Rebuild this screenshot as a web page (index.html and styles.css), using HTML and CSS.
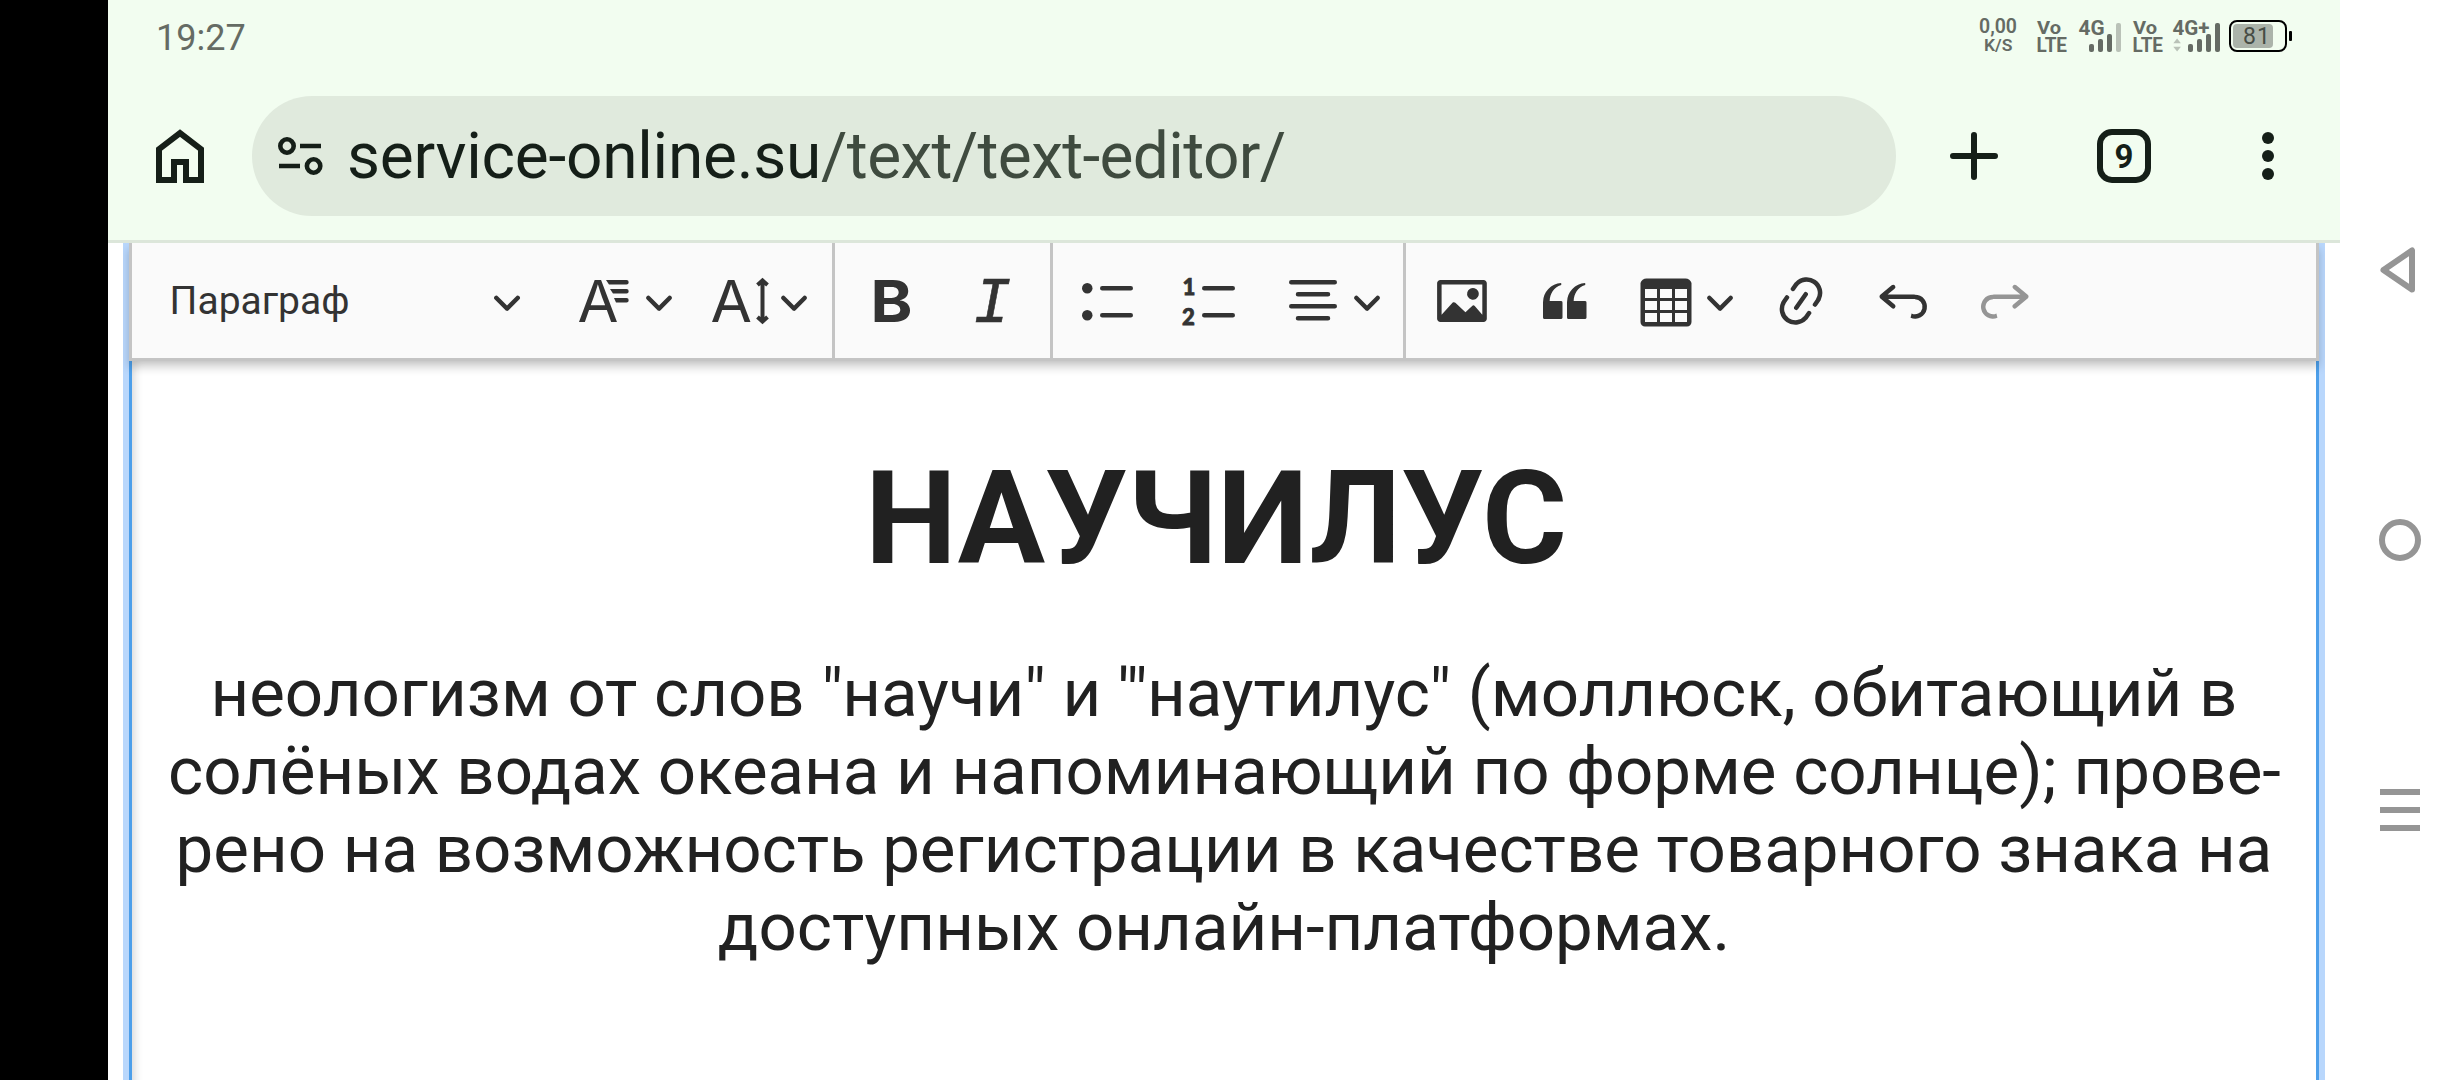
FILE: index.html
```html
<!DOCTYPE html>
<html lang="ru">
<head>
  <meta charset="UTF-8" />
  <meta name="viewport" content="width=device-width, initial-scale=1.0"/>
  <title>Текстовый редактор</title>
  <link rel="stylesheet" href="styles.css">
</head>
<body>

  <div class="cutout"></div>

  <div class="browser">
    <div class="status-bar">
      <span class="time">19:27</span>
      <svg class="status-icons" width="320" height="60" viewBox="1975 0 320 60">
        <g fill="#656b64">
          <rect x="2089" y="44" width="5" height="8" rx="2"/>
          <rect x="2098" y="39" width="5" height="13" rx="2"/>
          <rect x="2107" y="34" width="5" height="18" rx="2"/>
          <rect x="2116" y="23" width="5" height="29" rx="2" fill="#bac2b8"/>
          <rect x="2188" y="44" width="5" height="8" rx="2"/>
          <rect x="2197" y="39" width="5" height="13" rx="2"/>
          <rect x="2206" y="34" width="5" height="18" rx="2"/>
          <rect x="2215" y="23" width="5" height="29" rx="2"/>
          <path d="M2173.3 43.3l3.8-4.8 3.8 4.8zm0 3.4l3.8 4.8 3.8-4.8z" fill="#bac2b8"/>
        </g>
        <rect x="2230" y="21" width="56" height="30" rx="7" fill="none" stroke="#000" stroke-width="2"/>
        <rect x="2233" y="24" width="40" height="24" rx="4" fill="#abb3aa"/>
        <rect x="2289" y="31" width="3" height="10" rx="1"/>
        <g class="status-text">
          <text x="1979" y="33" font-size="20" textLength="38" lengthAdjust="spacingAndGlyphs">0,00</text>
          <text x="1984" y="51" font-size="16.5" textLength="28.5" lengthAdjust="spacingAndGlyphs">K/S</text>
          <text class="strong" x="2037" y="33.5" font-size="18.5" textLength="24" lengthAdjust="spacingAndGlyphs">Vo</text>
          <text class="strong" x="2036.5" y="52" font-size="19.5" textLength="30.5" lengthAdjust="spacingAndGlyphs">LTE</text>
          <text class="strong" x="2078.5" y="35" font-size="20.5" textLength="26" lengthAdjust="spacingAndGlyphs">4G</text>
          <text class="strong" x="2133" y="33.5" font-size="18.5" textLength="24" lengthAdjust="spacingAndGlyphs">Vo</text>
          <text class="strong" x="2132.5" y="52" font-size="19.5" textLength="30.5" lengthAdjust="spacingAndGlyphs">LTE</text>
          <text class="strong" x="2172.5" y="35" font-size="20.5" textLength="37" lengthAdjust="spacingAndGlyphs">4G+</text>
          <text class="percent" x="2243" y="44" font-size="23" textLength="27">81</text>
        </g>
      </svg>
    </div>

    <div class="address-row">
      <svg class="home" width="48" height="54" viewBox="0 0 48 54">
        <path d="M3 20.2V51h15V33h12v18h15V20.2L24 4z" fill="none" stroke="#151f18" stroke-width="6"/>
      </svg>
      <div class="url-bar">
        <svg width="46" height="40" viewBox="0 0 46 40" fill="none" stroke="#151f18" stroke-width="4.6">
          <circle cx="10" cy="10" r="6.7"/>
          <path d="M23 10h21M2 30h21"/>
          <circle cx="36.6" cy="30" r="6.7"/>
        </svg>
        <span class="url">service-online.su<span class="path">/text/text-editor/</span></span>
      </div>
      <svg class="new-tab" width="48" height="48" viewBox="0 0 48 48">
        <path d="M24 3v42M3 24h42" stroke="#151f18" stroke-width="6" stroke-linecap="round"/>
      </svg>
      <span class="tabs">9</span>
      <svg class="more" width="12" height="48" viewBox="0 0 12 48" fill="#151f18">
        <circle cx="6" cy="6" r="6"/><circle cx="6" cy="24" r="6"/><circle cx="6" cy="42" r="6"/>
      </svg>
    </div>

    <div class="page">
      <div class="editor">
        <div class="toolbar">
          <div class="group first">
            <div class="btn heading">
              <span>Параграф</span>
              <svg class="arrow" viewBox="0 0 10 10"><path d="M.941 4.523a.75.75 0 1 1 1.06-1.06l3.006 3.005 3.005-3.005a.75.75 0 1 1 1.06 1.06l-3.549 3.55a.75.75 0 0 1-1.168-.136z"/></svg>
            </div>
            <div class="btn dropdown">
              <svg class="icon" viewBox="0 0 60 60">
                <text class="letter" x="2.5" y="51" font-size="57.8" textLength="41" lengthAdjust="spacingAndGlyphs">A</text>
                <path class="halo" d="M30 9h25v4.400H32zM34 18h21v4.400H36zM38 27h17v4.400H39z"/>
                <path d="M31 9h20.500a2.200 2.200 0 0 1 0 4.400H34zM35 18h16.500a2.200 2.200 0 0 1 0 4.400H38zM39 27h12.500a2.200 2.200 0 0 1 0 4.400H41z"/>
              </svg>
              <svg class="arrow" viewBox="0 0 10 10"><path d="M.941 4.523a.75.75 0 1 1 1.06-1.06l3.006 3.005 3.005-3.005a.75.75 0 1 1 1.06 1.06l-3.549 3.55a.75.75 0 0 1-1.168-.136z"/></svg>
            </div>
            <div class="btn dropdown">
              <svg class="icon" viewBox="0 0 60 60">
                <text class="letter" x="0.5" y="51" font-size="57.8" textLength="41.5" lengthAdjust="spacingAndGlyphs">A</text>
                <path d="M52.500 11v38M47.500 14l5-4.500 5 4.500M47.500 46l5 4.500 5-4.500" fill="none" stroke="#333" stroke-width="4"/>
              </svg>
              <svg class="arrow" viewBox="0 0 10 10"><path d="M.941 4.523a.75.75 0 1 1 1.06-1.06l3.006 3.005 3.005-3.005a.75.75 0 1 1 1.06 1.06l-3.549 3.55a.75.75 0 0 1-1.168-.136z"/></svg>
            </div>
          </div>

          <div class="group">
            <div class="btn">
              <svg class="icon" viewBox="0 0 60 60"><text class="letter bold" x="8.500" y="51" font-size="57.8" textLength="42" lengthAdjust="spacingAndGlyphs">B</text></svg>
            </div>
            <div class="btn">
              <svg class="icon" viewBox="0 0 60 60"><text class="italic" x="10" y="51" font-size="64" textLength="38" lengthAdjust="spacingAndGlyphs">I</text></svg>
            </div>
          </div>

          <div class="group">
            <div class="btn">
              <svg class="icon" viewBox="0 0 20 20">
                <circle cx="2.750" cy="5.750" r="1.750"/><circle cx="2.750" cy="14.750" r="1.750"/>
                <path class="line" d="M7.750 5.750h9.500M7.750 14.750h9.500"/>
              </svg>
            </div>
            <div class="btn">
              <svg class="icon" viewBox="0 0 20 20">
                <text class="digit" x="0.500" y="8" font-size="7.400">1</text>
                <text class="digit" x="0.300" y="18" font-size="7.400">2</text>
                <path class="line" d="M7.750 5.750h9.500M7.750 14.750h9.500"/>
              </svg>
            </div>
            <div class="btn dropdown">
              <svg class="icon" viewBox="0 0 20 20"><path class="line" d="M2.750 3.750h14.500M5 7.750h10M2.750 11.750h14.500M5 15.750h10"/></svg>
              <svg class="arrow" viewBox="0 0 10 10"><path d="M.941 4.523a.75.75 0 1 1 1.06-1.06l3.006 3.005 3.005-3.005a.75.75 0 1 1 1.06 1.06l-3.549 3.55a.75.75 0 0 1-1.168-.136z"/></svg>
            </div>
          </div>

          <div class="group last">
            <div class="btn">
              <svg class="icon" viewBox="0 0 20 20"><path d="M6.910 10.540c.26-.23.64-.21.88.03l3.360 3.140 2.230-2.060a.64.64 0 0 1 .87 0l2.520 2.970V4.500H3.200v10.120l3.710-4.080zm10.270-7.510c.6 0 1.090.47 1.090 1.050v11.840c0 .59-.49 1.060-1.090 1.060H2.790c-.6 0-1.090-.47-1.090-1.060V4.080c0-.58.49-1.050 1.100-1.050h14.380zm-5.220 5.560a1.960 1.960 0 1 1 3.400-1.960 1.960 1.960 0 0 1-3.400 1.960z"/></svg>
            </div>
            <div class="btn">
              <svg class="icon" viewBox="0 0 20 20"><path d="M3 10.423a6.5 6.5 0 0 1 6.056-6.408l.038.67C6.448 5.423 5.354 7.663 5.22 10H9c.552 0 .5.432.5.986v4.511c0 .554-.448.503-1 .503h-5c-.552 0-.5-.449-.5-1.003v-4.574zm8 0a6.5 6.5 0 0 1 6.056-6.408l.038.67c-2.646.739-3.74 2.979-3.873 5.315H17c.552 0 .5.432.5.986v4.511c0 .554-.448.503-1 .503h-5c-.552 0-.5-.449-.5-1.003v-4.574z"/></svg>
            </div>
            <div class="btn dropdown">
              <svg class="icon" viewBox="0 0 20 20"><path d="M3 6v3h4V6H3zm0 4v3h4v-3H3zm0 4v3h4v-3H3zm5 3h4v-3H8v3zm5 0h4v-3h-4v3zm4-4v-3h-4v3h4zm0-4V6h-4v3h4zm1.500 8a1.500 1.500 0 0 1-1.500 1.500H3A1.500 1.500 0 0 1 1.500 17V4c.222-.863 1.068-1.500 2-1.500h13c.932 0 1.778.637 2 1.500v13zM12 13v-3H8v3h4zm0-4V6H8v3h4z"/></svg>
              <svg class="arrow" viewBox="0 0 10 10"><path d="M.941 4.523a.75.75 0 1 1 1.06-1.06l3.006 3.005 3.005-3.005a.75.75 0 1 1 1.06 1.06l-3.549 3.55a.75.75 0 0 1-1.168-.136z"/></svg>
            </div>
            <div class="btn link">
              <svg class="icon" viewBox="0 0 20 20"><path d="m11.077 15 .991-1.416a.75.75 0 1 1 1.229.86l-1.148 1.640a.748.748 0 0 1-.217.206 5.251 5.251 0 0 1-8.503-5.955.741.741 0 0 1 .12-.274l1.147-1.639a.75.75 0 1 1 1.228.86L4.933 10.700l.006.003a3.750 3.750 0 0 0 6.132 4.294l.006.004zm5.494-5.335a.748.748 0 0 1-.12.274l-1.147 1.639a.75.75 0 1 1-1.228-.86l.86-1.230a3.750 3.750 0 0 0-6.144-4.301l-.86 1.229a.75.75 0 0 1-1.229-.86l1.148-1.640a.748.748 0 0 1 .217-.206 5.251 5.251 0 0 1 8.503 5.955zm-4.563-2.532a.75.75 0 0 1 .184 1.045l-3.155 4.505a.75.75 0 1 1-1.229-.86l3.155-4.506a.75.75 0 0 1 1.045-.184z"/></svg>
            </div>
            <div class="btn">
              <svg class="icon" viewBox="0 0 20 20"><path d="m5.042 9.367 2.189 1.837a.75.75 0 0 1-.965 1.149l-3.788-3.180a.747.747 0 0 1-.21-.284.75.75 0 0 1 .17-.945L6.230 4.762a.75.75 0 1 1 .964 1.150L4.863 7.866h8.917A.75.75 0 0 1 14 7.900a4 4 0 1 1-1.477 7.718l.344-1.489a2.500 2.500 0 1 0 1.094-4.730l.008-.032H5.042z"/></svg>
            </div>
            <div class="btn disabled">
              <svg class="icon" viewBox="0 0 20 20"><path d="m14.958 9.367-2.189 1.837a.75.75 0 0 0 .965 1.149l3.788-3.180a.747.747 0 0 0 .21-.284.75.75 0 0 0-.17-.945L13.770 4.762a.75.75 0 1 0-.964 1.150l2.331 1.955H6.220A.75.75 0 0 0 6 7.900a4 4 0 1 0 1.477 7.718l-.344-1.489A2.500 2.500 0 1 1 6.039 9.400l-.008-.032h8.927z"/></svg>
            </div>
          </div>
        </div>

        <div class="content">
          <h1>НАУЧИЛУС</h1>
          <p>неологизм от слов "научи" и '"наутилус" (моллюск, обитающий в<br>
            солёных водах океана и напоминающий по форме солнце); прове-<br>
            рено на возможность регистрации в качестве товарного знака на<br>
            доступных онлайн-платформах.</p>
        </div>
      </div>
    </div>
  </div>

  <div class="nav-bar">
    <svg width="60" height="60" viewBox="0 0 60 60"><path d="M42 10.500v39L13.500 30z"/></svg>
    <svg width="60" height="60" viewBox="0 0 60 60"><circle cx="30" cy="30" r="18"/></svg>
    <svg width="60" height="60" viewBox="0 0 60 60"><path d="M10 12h40M10 30h40M10 48h40"/></svg>
  </div>

</body>
</html>
```
FILE: styles.css
```css
* {
  box-sizing: border-box;
}
body {
  margin: 0;
  width: 2460px;
  height: 1080px;
  display: flex;
  overflow: hidden;
  background: #fff;
  font-family: Roboto, sans-serif;
}
svg {
  display: block;
  flex: none;
  overflow: visible;
}
.cutout {
  width: 108px;
  background: #000;
}
.browser {
  width: 2232px;
  display: flex;
  flex-direction: column;
}

/* status bar */
.status-bar {
  flex: none;
  height: 72px;
  padding: 0 45px 0 48px;
  display: flex;
  justify-content: space-between;
  background: #f2fdf0;
}
.time {
  padding-top: 17px;
  font-size: 36px;
  line-height: 43px;
  color: #656b64;
}
.status-text {
  font-weight: 600;
  fill: #656b64;
}
.strong {
  font-weight: 700;
}
.percent {
  font-weight: 400;
  fill: #464c45;
}

/* address row */
.address-row {
  flex: none;
  height: 171px;
  padding: 0 66px 0 48px;
  display: flex;
  align-items: center;
  background: #f2fdf0;
  border-bottom: 3px solid #dce6da;
}
.url-bar {
  width: 1644px;
  height: 120px;
  margin-left: 48px;
  padding-left: 25px;
  display: flex;
  align-items: center;
  border-radius: 60px;
  background: #e0eadd;
}
.url {
  margin-left: 24px;
  padding-top: 1px;
  font-size: 64px;
  letter-spacing: -0.25px;
  white-space: nowrap;
  color: #151f18;
}
.path {
  letter-spacing: -0.65px;
  color: #3f4b3f;
}
.new-tab {
  margin-left: 54px;
}
.tabs {
  width: 54px;
  height: 54px;
  margin-left: 99px;
  border: 6px solid #151f18;
  border-radius: 15px;
  font-size: 33px;
  font-weight: 700;
  line-height: 43px;
  text-align: center;
  color: #151f18;
}
.more {
  margin-left: 111px;
}

/* editor */
.page {
  flex: 1;
  min-height: 0;
  padding: 0 21px;
  background: #fff;
}
.editor {
  height: 100%;
  box-shadow: 0 0 0 6px #b9d7fc;
  clip-path: inset(0 -6px);
}
.toolbar {
  position: relative;
  height: 118px;
  display: flex;
  border: 3px solid #c4c4c4;
  border-top: none;
  background: #fafafa;
  box-shadow: 0 6px 9px rgba(0, 0, 0, 0.2);
}
.group {
  display: flex;
  gap: 11.6px;
  height: 115px;
  padding: 13px 11.6px 0;
  border-right: 3px solid #c4c4c4;
}
.group.first {
  width: 703px;
}
.group.last {
  border-right: none;
}
.btn {
  width: 90px;
  height: 90px;
  padding: 0 15px;
  display: flex;
  flex: none;
  align-items: center;
}
.dropdown {
  width: 123.6px;
  padding-right: 0;
}
.link {
  margin-left: 0.6px;
}
.heading {
  width: 405px;
  padding: 0 27px 0 26px;
  justify-content: space-between;
  font-size: 39px;
  color: #333;
}
.heading span {
  padding-bottom: 1px;
}
.icon {
  width: 60px;
  height: 60px;
  fill: #333;
}
.arrow {
  width: 30px;
  height: 30px;
  margin-left: 9px;
  fill: #333;
}
.line {
  fill: none;
  stroke: #333;
  stroke-width: 1.5;
  stroke-linecap: round;
}
.letter {
  font-family: Inter, sans-serif;
}
.letter.bold {
  font-weight: 700;
}
.italic {
  font-family: "Liberation Mono", monospace;
  font-style: italic;
  stroke: #333;
  stroke-width: 0.6;
}
.digit {
  font-family: Lato, sans-serif;
  font-weight: 900;
  stroke: #333;
  stroke-width: 0.25;
}
.halo {
  fill: #fafafa;
}
.disabled {
  opacity: 0.5;
}
.content {
  height: 740px;
  padding: 80px 36px 0;
  border: 3px solid #4d9fea;
  border-top: none;
  border-bottom: none;
  box-shadow: inset 6px 0 9px -3px rgba(0, 0, 0, 0.15);
  text-align: center;
  color: #212121;
}
h1 {
  margin: 0;
  padding-right: 16px;
  font-size: 130px;
  line-height: 156px;
  font-weight: 700;
}
p {
  margin: 57px 0 0;
  font-size: 67.2px;
  line-height: 78px;
  white-space: nowrap;
}

/* system navigation */
.nav-bar {
  width: 120px;
  display: flex;
  flex-direction: column;
  align-items: center;
  justify-content: center;
  gap: 210px;
  background: #fff;
}
.nav-bar svg {
  fill: none;
  stroke: #959595;
  stroke-width: 6;
  stroke-linejoin: round;
}
```
